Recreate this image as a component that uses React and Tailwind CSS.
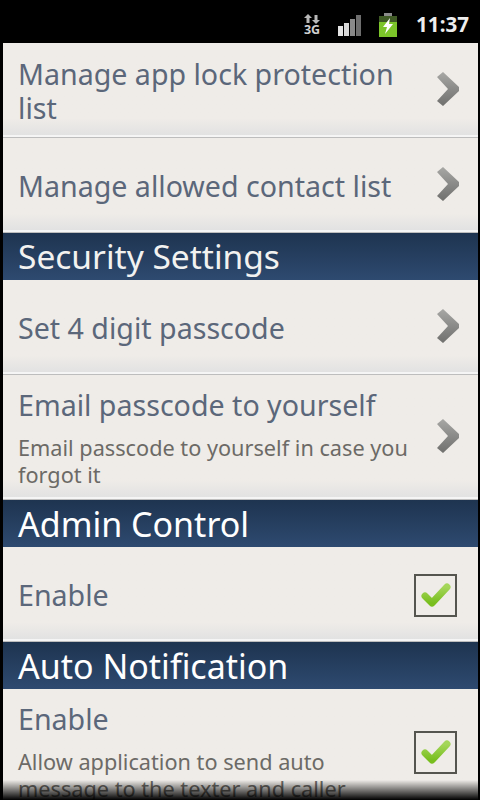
import React from 'react'

const sans = { fontFamily: '"Noto Sans", "Open Sans", sans-serif' }

function Chevron() {
  return (
    <svg width="26" height="36" viewBox="0 0 26 36" className="shrink-0 blur-[0.5px]">
      <defs>
        <linearGradient id="chev" x1="0" y1="0" x2="0" y2="1">
          <stop offset="0" stopColor="#a8a8a5" />
          <stop offset="0.5" stopColor="#8a8a88" />
          <stop offset="1" stopColor="#70706e" />
        </linearGradient>
      </defs>
      <path d="M2 6 L8 1 L24 16 L24 20 L8 35 L2 30 L13 18 Z" fill="url(#chev)" />
    </svg>
  )
}

function CheckBox() {
  return (
    <div className="w-[43px] h-[43px] shrink-0 mr-[4px] mt-[4px] border-[2px] border-[#55554f] bg-[#efece8] flex items-center justify-center">
      <svg width="30" height="26" viewBox="0 0 30 26">
        <defs>
          <linearGradient id="tick" x1="0" y1="0" x2="0" y2="1">
            <stop offset="0" stopColor="#a4d65a" />
            <stop offset="1" stopColor="#78be1e" />
          </linearGradient>
        </defs>
        <path d="M4 14 L11 21 L26 5" fill="none" stroke="url(#tick)" strokeWidth="7" strokeLinecap="round" strokeLinejoin="round" />
      </svg>
    </div>
  )
}

function SectionHeader({ title, size = 'text-[34px]', color = 'text-white' }) {
  return (
    <div className="h-[47px] shrink-0 bg-gradient-to-b from-[#1e3450] to-[#2e4a70] flex items-center pl-[15px]">
      <span className={`${size} leading-none ${color} pt-[1px]`}>{title}</span>
    </div>
  )
}

function Row({ title, sub, right, height, fade = 'from-[82%]' }) {
  return (
    <div className={`${height} shrink-0 flex items-center bg-gradient-to-b from-[#efece8] ${fade} to-[#e2e2e2] pl-[15px] pr-[17px]`}>
      <div className="flex-1 min-w-0 pt-[4px]">
        <div className="text-[28.6px] leading-[34px] text-[#5b677a]">{title}</div>
        {sub && <div className="text-[21.7px] leading-[27px] mt-[12px] text-[#6c6a66]">{sub}</div>}
      </div>
      {right}
    </div>
  )
}

function Divider() {
  return <div className="h-[3px] shrink-0 bg-[#f5f5f5] border-b border-[#bdbdbd]" />
}

function StatusBar() {
  return (
    <div className="h-[43px] shrink-0 bg-black flex items-center justify-end pr-[11px]">
      <div className="flex flex-col items-center mt-[6px] mr-[18px] text-[#d0d0d0]">
        <svg width="16" height="10" viewBox="0 0 16 10">
          <path d="M4 0 L8 4 H5.5 V9 H2.5 V4 H0 Z M12 10 L8 6 H10.5 V1 H13.5 V6 H16 Z" fill="#b8b8b8" />
        </svg>
        <span className="text-[12.5px] leading-[10px] font-bold mt-[1px]">3G</span>
      </div>
      <svg width="24" height="21" viewBox="0 0 24 21" className="mt-[7px] mr-[17px]">
        <rect x="0" y="11" width="5" height="10" fill="#e4e4e4" />
        <rect x="6" y="8" width="5" height="13" fill="#d8d8d8" />
        <rect x="12" y="4" width="5" height="17" fill="#8a8a8a" />
        <rect x="18" y="0" width="5" height="21" fill="#6e6e6e" />
      </svg>
      <svg width="18" height="24" viewBox="0 0 18 24" className="mt-[6px] mr-[19px]">
        <rect x="5" y="0" width="8" height="3" fill="#8a8a8a" />
        <rect x="0" y="3" width="18" height="21" fill="#7cc52a" />
        <rect x="0" y="3" width="18" height="6" fill="#3f5a25" />
        <path d="M11 5 L4 14 H8 L6 21 L14 11 H10 Z" fill="#fff" />
      </svg>
      <span className="text-[20.6px] font-bold text-[#ededed] leading-none mt-[6px]">11:37</span>
    </div>
  )
}

export default function App() {
  return (
    <div style={sans} className="relative w-[480px] h-[800px] overflow-hidden bg-black flex flex-col">
      <StatusBar />
      <div className="flex-1 min-h-0 overflow-hidden ml-[3px] mr-[2px] flex flex-col bg-[#efece8]">
        <Row height="h-[92px]" title={<>Manage app lock protection<br />list</>} right={<Chevron />} />
        <Divider />
        <Row height="h-[92px]" title="Manage allowed contact list" right={<Chevron />} />
        <Divider />
        <SectionHeader title="Security Settings" size="text-[33.5px]" color="text-[#f2f2f0]" />
        <Row height="h-[92px]" title="Set 4 digit passcode" right={<Chevron />} />
        <Divider />
        <Row
          height="h-[122px]"
          fade="from-[86%]"
          title="Email passcode to yourself"
          sub={<>Email passcode to yourself in case you<br />forgot it</>}
          right={<Chevron />}
        />
        <Divider />
        <SectionHeader title="Admin Control" />
        <Row height="h-[92px]" title="Enable" right={<CheckBox />} />
        <Divider />
        <SectionHeader title="Auto Notification" />
        <Row
          height="h-[122px]"
          fade="from-[86%]"
          title="Enable"
          sub={<>Allow application to send auto<br />message to the texter and caller</>}
          right={<CheckBox />}
        />
      </div>
      {/* scroll fade at the bottom edge */}
      <div className="absolute left-0 right-0 bottom-0 h-[20px] bg-gradient-to-b from-transparent to-black" />
    </div>
  )
}
